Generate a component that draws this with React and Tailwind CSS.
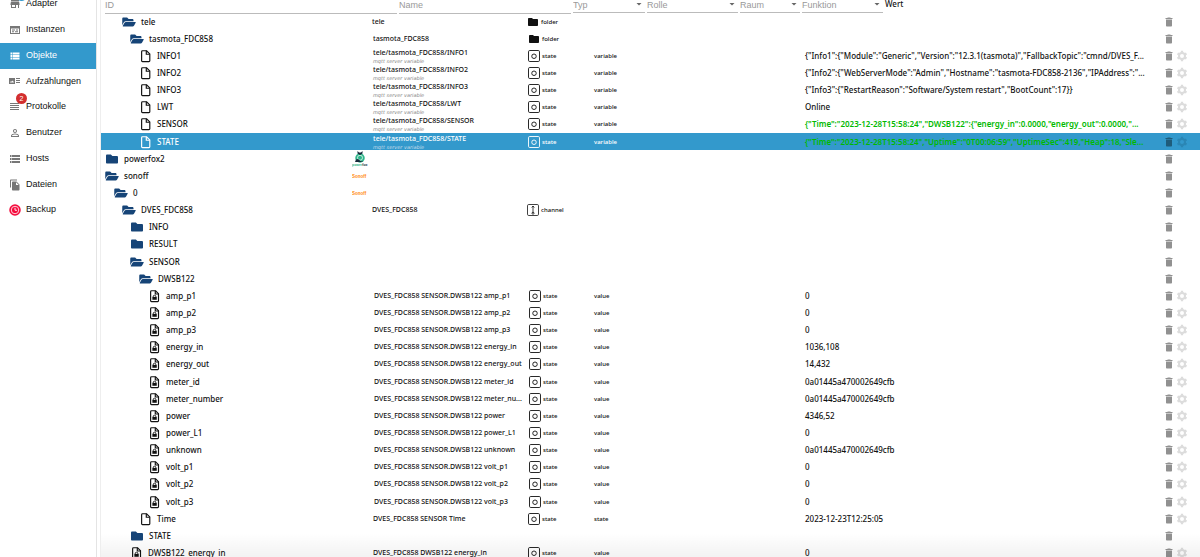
import React, { useState } from "react";
import {
  MdStore, MdViewList, MdPersonOutline, MdStorage, MdFileCopy,
  MdDelete, MdArrowDropDown, MdFolder,
} from "react-icons/md";
import { FaFolder, FaFolderOpen } from "react-icons/fa";

const InstancesIcon = () => (
  <svg viewBox="0 0 12 12" className="size-3" fill="currentColor">
    <path d="M1 2H11V10H1ZM2 4.5V9H10V4.5Z" fillRule="evenodd" />
    <path d="M3 5.5H6V6.5H3ZM7 5.5H9V6.5H7ZM3 7.3H5V8.3H3ZM6 7.3H9V8.3H6Z" />
  </svg>
);

const EnumsIcon = () => (
  <svg viewBox="0 0 12 12" className="size-3" fill="currentColor">
    <path d="M0 2H6V8H0ZM1 6.5H5L3.7 4.5L2.8 5.8L2 5Z" fillRule="evenodd" />
    <path d="M7 2H11V3H7ZM7 4H11V5H7ZM7 6H11V7H7Z" />
  </svg>
);

const LogsIcon = () => (
  <svg viewBox="0 0 12 12" className="size-3" fill="currentColor">
    <path d="M1 2H10V3H1ZM1 4H10V5H1ZM1 6H10V7H1ZM1 8H10V9H1Z" />
  </svg>
);

const BackupIcon = () => (
  <svg viewBox="0 0 24 24" className="size-3">
    <circle cx="12" cy="12" r="11.5" fill="#f50a3c" />
    <circle cx="12" cy="12" r="7.5" fill="none" stroke="#fff" strokeWidth="1.6" />
    <path d="M12 7.5V12.5H16" fill="none" stroke="#fff" strokeWidth="1.8" />
  </svg>
);

const GearIcon = () => (
  <svg viewBox="0 0 24 24" className="size-3" fill="none" stroke="currentColor">
    <circle cx="12" cy="12" r="6" strokeWidth="4" />
    <path d="M12 1.5V5M12 19V22.5M3 6.8L6 8.5M18 15.5L21 17.2M3 17.2L6 15.5M18 8.5L21 6.8" strokeWidth="4.5" />
  </svg>
);

const FileIcon = () => (
  <svg viewBox="0 0 24 24" className="size-3.5 shrink-0" fill="none" stroke="currentColor" strokeWidth="2">
    <path d="M6 3H13L18.5 8.5V20Q18.5 21.5 17 21.5H6Q4.5 21.5 4.5 20V4.5Q4.5 3 6 3Z" />
    <path d="M12.5 3V9H18.5" />
  </svg>
);

const FileLockIcon = () => (
  <svg viewBox="0 0 24 24" className="size-3.5 shrink-0" fill="none" stroke="currentColor" strokeWidth="2">
    <path d="M6 3H13L18 8V20Q18 21.5 16.5 21.5H6Q4.5 21.5 4.5 20V4.5Q4.5 3 6 3Z" />
    <path d="M12.5 3V8.5H18" />
    <path d="M7.5 13.5H15V18.5H7.5Z" fill="currentColor" stroke="none" />
    <path d="M9 14V12Q9 10.8 11.2 10.8T13.4 12V14" strokeWidth="1.4" />
  </svg>
);

const StateIcon = () => (
  <svg viewBox="0 0 24 24" className="size-3 shrink-0" fill="none" stroke="currentColor" strokeWidth="1.8">
    <rect x="1" y="1" width="22" height="22" rx="2.5" />
    <circle cx="12" cy="12.5" r="4.5" />
  </svg>
);

const ChannelIcon = () => (
  <svg viewBox="0 0 24 24" className="size-3 shrink-0" fill="none" stroke="currentColor" strokeWidth="1.6">
    <rect x="1" y="1" width="22" height="22" rx="2.5" />
    <path d="M12 4V18M9.5 7L12 4L14.5 7" />
    <circle cx="12" cy="18.5" r="2" />
  </svg>
);

const PowerfoxLogo = () => (
  <svg viewBox="0 0 32 32" className="size-4">
    <circle cx="16" cy="14" r="9.5" fill="#2fb58a" />
    <circle cx="16" cy="13.5" r="5" fill="none" stroke="#d6f5ea" strokeWidth="1.8" />
    <path d="M11 0L14 3H18L21 0V5L16 8L11 5Z" fill="#15293a" />
    <path d="M6 22L8 17L12 16L17 20L23 22Z" fill="#15293a" />
    <text x="0" y="30" fontSize="7" fontWeight="bold" fontFamily="Liberation Sans, sans-serif" fill="#2fb58a">
      power<tspan fill="#15293a">fox</tspan>
    </text>
  </svg>
);

const SonoffLogo = () => (
  <svg viewBox="0 0 32 32" className="size-4">
    <text x="0" y="19" fontSize="9" fontWeight="bold" fontFamily="Liberation Sans, sans-serif" fill="#ff8c10">Sonoff</text>
  </svg>
);

const menu = [
  { title: "Adapter", icon: MdStore, updates: true },
  { title: "Instanzen", icon: InstancesIcon },
  { title: "Objekte", icon: MdViewList },
  { title: "Aufzählungen", icon: EnumsIcon },
  { title: "Protokolle", icon: LogsIcon, badge: 2 },
  { title: "Benutzer", icon: MdPersonOutline },
  { title: "Hosts", icon: MdStorage },
  { title: "Dateien", icon: MdFileCopy },
  { title: "Backup", icon: BackupIcon },
];

const mqtt = (id, value, green) => ({
  id, level: 4, kind: "file", name: `tele/tasmota_FDC858/${id}`, desc: "mqtt server variable",
  type: "state", role: "variable", value, green,
});

const meter = (id, value) => ({
  id, level: 5, kind: "lock", name: `DVES_FDC858 SENSOR.DWSB122 ${id}`, type: "state", role: "value", value,
});

const objects = [
  { id: "tele", level: 2, kind: "open", name: "tele", type: "folder" },
  { id: "tasmota_FDC858", level: 3, kind: "open", name: "tasmota_FDC858", type: "folder" },
  mqtt("INFO1", '{"Info1":{"Module":"Generic","Version":"12.3.1(tasmota)","FallbackTopic":"cmnd/DVES_F...'),
  mqtt("INFO2", '{"Info2":{"WebServerMode":"Admin","Hostname":"tasmota-FDC858-2136","IPAddress":"...'),
  mqtt("INFO3", '{"Info3":{"RestartReason":"Software/System restart","BootCount":17}}'),
  mqtt("LWT", "Online"),
  mqtt("SENSOR", '{"Time":"2023-12-28T15:58:24","DWSB122":{"energy_in":0.0000,"energy_out":0.0000,"...', true),
  mqtt("STATE", '{"Time":"2023-12-28T15:58:24","Uptime":"0T00:06:59","UptimeSec":419,"Heap":18,"Sle...', true),
  { id: "powerfox2", level: 0, kind: "closed", logo: "powerfox" },
  { id: "sonoff", level: 0, kind: "open", logo: "sonoff" },
  { id: "0", level: 1, kind: "open", logo: "sonoff" },
  { id: "DVES_FDC858", level: 2, kind: "open", name: "DVES_FDC858", type: "channel" },
  { id: "INFO", level: 3, kind: "closed" },
  { id: "RESULT", level: 3, kind: "closed" },
  { id: "SENSOR", level: 3, kind: "open" },
  { id: "DWSB122", level: 4, kind: "open" },
  meter("amp_p1", "0"),
  meter("amp_p2", "0"),
  meter("amp_p3", "0"),
  meter("energy_in", "1036,108"),
  meter("energy_out", "14,432"),
  meter("meter_id", "0a01445a470002649cfb"),
  { ...meter("meter_number", "0a01445a470002649cfb"), name: "DVES_FDC858 SENSOR.DWSB122 meter_nu..." },
  meter("power", "4346,52"),
  meter("power_L1", "0"),
  meter("unknown", "0a01445a470002649cfb"),
  meter("volt_p1", "0"),
  meter("volt_p2", "0"),
  meter("volt_p3", "0"),
  { id: "Time", level: 4, kind: "file", name: "DVES_FDC858 SENSOR Time", type: "state", role: "state", value: "2023-12-23T12:25:05" },
  { id: "STATE", level: 3, kind: "closed" },
  { id: "DWSB122_energy_in", level: 3, kind: "lock", name: "DVES_FDC858 DWSB122 energy_in", type: "state", role: "value", value: "0" },
];

const indents = ["pl-1", "pl-[13px]", "pl-[21px]", "pl-[29px]", "pl-[38px]", "pl-[47px]"];
const shifts = ["pl-0", "pl-0", "pl-0", "pl-px", "pl-px", "pl-0.5"];

const TreeIcon = ({ kind }) => {
  if (kind === "open") return <FaFolderOpen className="w-3.5 h-3 shrink-0 text-[#164477]" />;
  if (kind === "closed") return <FaFolder className="w-3.5 h-3 shrink-0 text-[#164477]" />;
  return kind === "lock" ? <FileLockIcon /> : <FileIcon />;
};

const TypeIcon = ({ type }) => {
  if (type === "folder") return <MdFolder className="size-3 shrink-0" />;
  return type === "channel" ? <ChannelIcon /> : <StateIcon />;
};

const ObjectRow = ({ obj, selected, onSelect }) => {
  const leaf = obj.kind === "file" || obj.kind === "lock";
  return (
    <tr
      onClick={onSelect}
      className={`h-[17px] nth-[7n]:h-[18px] cursor-pointer ${selected ? "bg-[#3399cc] text-white" : "text-[#111]"}`}
    >
      <td className={`p-0 ${indents[obj.level]}`}>
        <div className={`flex items-center h-4 text-[8px] font-medium ${leaf ? "gap-1" : "gap-[5px]"}`}>
          <TreeIcon kind={obj.kind} />
          <span>{obj.id}</span>
        </div>
      </td>
      <td className="p-0">
        {obj.logo === "powerfox" && <PowerfoxLogo />}
        {obj.logo === "sonoff" && <SonoffLogo />}
      </td>
      <td className={`p-0 ${shifts[obj.level]}`}>
        <div className="text-[7px] leading-[10px] font-medium whitespace-nowrap">{obj.name}</div>
        {obj.desc && (
          <div className={`font-['DejaVu_Sans',sans-serif] text-[5px] leading-[6px] italic ${selected ? "text-[#c4dcea]" : "text-[#888]"}`}>{obj.desc}</div>
        )}
      </td>
      <td className={`p-0 ${shifts[obj.level]}`}>
        {obj.type && (
          <div className="flex items-center gap-0.5 text-[6px] leading-[12px] font-medium">
            <TypeIcon type={obj.type} />
            <span>{obj.type}</span>
          </div>
        )}
      </td>
      <td className="p-0">
        <div className="text-[6px] leading-[12px] font-medium">{obj.role}</div>
      </td>
      <td className="p-0">
        <div className={`text-[8px] leading-[12px] whitespace-nowrap ${obj.green ? "font-semibold text-[#00b900]" : "font-medium"}`}>{obj.value}</div>
      </td>
      <td className="p-0 pl-[13px]">
        <div className="flex items-center gap-px">
          <button aria-label="Löschen" className={selected ? "text-[#1f5c7a]" : "text-[#919191]"}>
            <MdDelete className="size-3" />
          </button>
          {leaf && (
            <button aria-label="Einstellungen" className={selected ? "text-[#2b86b4]" : "text-[#dcdcdc]"}>
              <GearIcon />
            </button>
          )}
        </div>
      </td>
    </tr>
  );
};

const FilterSelect = ({ label, className }) => (
  <div className={`relative h-[13px] border-b border-[#bbb] ${className}`}>
    <select aria-label={label} className="w-full h-2.5 appearance-none bg-transparent outline-none leading-[10px] text-[#999] block">
      <option>{label}</option>
    </select>
    <MdArrowDropDown className="absolute right-0 -top-0.5 size-3 text-[#666] pointer-events-none" />
  </div>
);

const App = () => {
  const [active, setActive] = useState("Objekte");
  const [selected, setSelected] = useState(7);

  return (
    <div className="h-screen flex overflow-hidden bg-white relative">
      <nav className="w-[97px] shrink-0 border-r border-[#e4e4e4] font-['Liberation_Sans',sans-serif] text-[9px] overflow-hidden">
        <ul className="-mt-[9px]">
          {menu.map(({ title, icon: Icon, badge, updates }) => (
            <li key={title} className="h-[26px] nth-[4n]:h-[25px]">
              <a
                href="#"
                onClick={() => setActive(title)}
                className={`h-full flex items-center pl-[9px] ${active === title ? "bg-[#3399cc] text-white" : "text-[#111]"}`}
              >
                <span className={`relative w-[17px] shrink-0 ${active === title ? "" : "text-[#777]"}`}>
                  <Icon className="size-3" />
                  {badge && (
                    <span className="absolute -top-2 left-[7px] size-[11px] rounded-full bg-[#d32f2f] text-white text-[7px] leading-[11px] text-center">{badge}</span>
                  )}
                  {updates && <span className="absolute -top-2 left-[7px] size-[11px] rounded-full bg-[#3399cc]"></span>}
                </span>
                <span>{title}</span>
              </a>
            </li>
          ))}
        </ul>
      </nav>

      <main className="flex-1 min-w-0 ml-[3px] border-l border-[#eee] font-['Noto_Sans',sans-serif]">
        <div className="h-[13px] flex items-start gap-0.5 pl-1 font-['Liberation_Sans',sans-serif] text-[9px]">
          <input aria-label="ID" placeholder="ID" className="w-[292px] h-3.5 pb-1 border-b border-[#bbb] outline-none placeholder:text-[#999]" />
          <input aria-label="Name" placeholder="Name" className="w-[172px] h-3.5 pb-1 border-b border-[#bbb] outline-none placeholder:text-[#999]" />
          <FilterSelect label="Typ" className="w-[72px]" />
          <FilterSelect label="Rolle" className="w-[91px]" />
          <FilterSelect label="Raum" className="w-[60px]" />
          <FilterSelect label="Funktion" className="w-[81px]" />
          <span className="leading-[8px] text-[8px] font-['Noto_Sans',sans-serif] font-medium text-[#111]">Wert</span>
        </div>

        <table className="w-full table-fixed border-collapse">
          <colgroup>
            <col className="w-[251px]" />
            <col className="w-5" />
            <col className="w-[155px]" />
            <col className="w-[67px]" />
            <col className="w-[211px]" />
            <col />
            <col className="w-[50px]" />
          </colgroup>
          <tbody>
            {objects.map((obj, i) => (
              <ObjectRow key={i} obj={obj} selected={selected === i} onSelect={() => setSelected(i)} />
            ))}
          </tbody>
        </table>
      </main>
      <div className="absolute bottom-0 left-[101px] right-0 h-6 bg-linear-to-b from-transparent to-black/5 pointer-events-none"></div>
    </div>
  );
};

export default App;
